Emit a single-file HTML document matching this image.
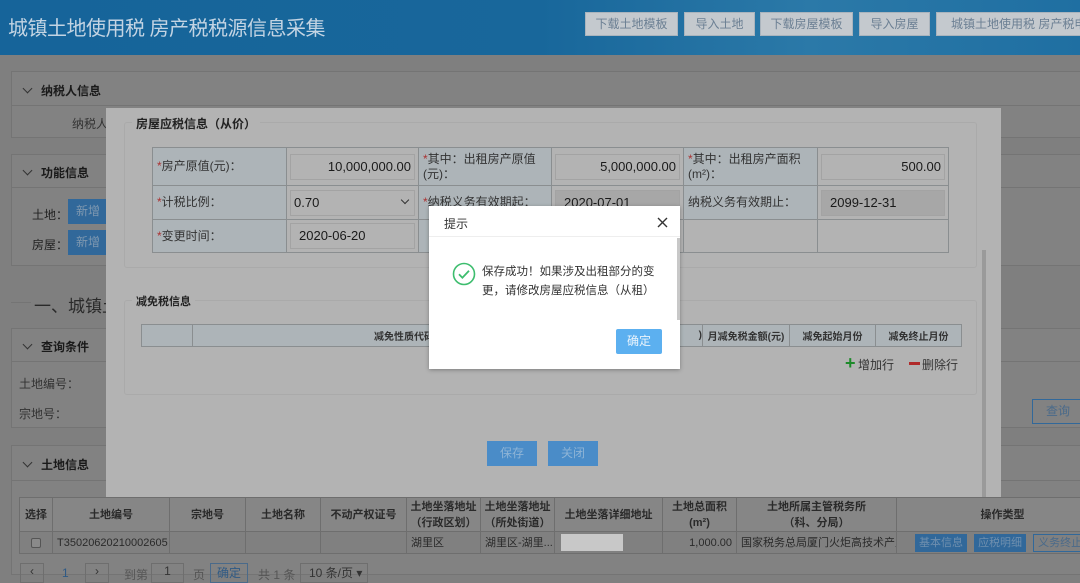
<!DOCTYPE html>
<html><head><meta charset="utf-8"><style>
*{box-sizing:border-box;margin:0;padding:0}
body{width:1080px;height:575px;overflow:hidden;background:#7f7f7f;font-family:"Liberation Sans","Noto Sans CJK SC",sans-serif;font-size:12px;color:#1e1e1e;position:relative}
.a{position:absolute}
.hd{left:0;top:0;width:1080px;height:55px;background:linear-gradient(90deg,#16649a 0%,#18679b 50%,#2b79a8 75%,#1f6fa2 100%)}
.hb{top:12px;height:24px;background:#c4c9ce;border:1px solid #aab4bd;color:#6b7f93;font-size:12px;text-align:center;line-height:22px}
.pn{border:1px solid #747474;background:#828282}
.ph{font-weight:bold;font-size:12px;color:#1a1a1a}
.chev{display:inline-block;width:7px;height:7px;border-right:1.3px solid #333;border-bottom:1.3px solid #333;transform:rotate(45deg);margin-right:10px;position:relative;top:-3px}
.bbtn{background:#31689a;color:#7f98b0;text-align:center}
table{border-collapse:collapse;table-layout:fixed}
td{white-space:nowrap;overflow:hidden}
.mt td{border:1px solid #8a8e90;vertical-align:middle}
.lb{background:#adb4b8;padding-left:4px;font-size:12px;color:#333;line-height:15px;white-space:normal!important}
.in{background:#b3b3b3;padding:3px 3px}
.ib{border:1px solid #a3a3a3;background:#b3b3b3;height:26px;line-height:24px;padding:0 3px;font-size:12px;color:#1a1a1a}
.st{color:#a33}
.bt td{border:1px solid #6e6e6e}
</style></head><body>
<div class="a hd"></div>
<div class="a" style="left:8px;top:12px;font-size:20px;color:#c3d4e3;letter-spacing:-0.5px">城镇土地使用税 房产税税源信息采集</div>
<div class="a hb" style="left:585px;width:93px">下载土地模板</div>
<div class="a hb" style="left:684px;width:71px">导入土地</div>
<div class="a hb" style="left:760px;width:93px">下载房屋模板</div>
<div class="a hb" style="left:859px;width:71px">导入房屋</div>
<div class="a hb" style="left:936px;width:160px;text-align:left;padding-left:14px;white-space:nowrap;overflow:hidden">城镇土地使用税 房产税申报</div>

<div class="a pn" style="left:11px;top:71px;width:1080px;height:67px"><div style="height:34px;border-bottom:1px solid #747474;padding:10px 0 0 12px" class="ph"><span class="chev"></span>纳税人信息</div><div style="padding:9px 0 0 60px;color:#333">纳税人</div></div>
<div class="a pn" style="left:11px;top:154px;width:1080px;height:112px"><div style="height:33px;border-bottom:1px solid #747474;padding:9px 0 0 12px" class="ph"><span class="chev"></span>功能信息</div></div>
<div class="a" style="left:32px;top:206px;color:#222">土地：</div><div class="a bbtn" style="left:68px;top:199px;width:40px;height:25px;line-height:25px">新增</div>
<div class="a" style="left:32px;top:236px;color:#222">房屋：</div><div class="a bbtn" style="left:68px;top:230px;width:40px;height:25px;line-height:25px">新增</div>
<div class="a" style="left:11px;top:302px;width:20px;border-top:1px solid #747474"></div>
<div class="a" style="left:34px;top:292px;font-size:17px;color:#2a2a2a">一、城镇土</div>
<div class="a pn" style="left:11px;top:328px;width:1080px;height:100px"><div style="height:33px;border-bottom:1px solid #747474;padding:9px 0 0 12px" class="ph"><span class="chev"></span>查询条件</div></div>
<div class="a" style="left:19px;top:375px;color:#333">土地编号：</div>
<div class="a" style="left:19px;top:405px;color:#333">宗地号：</div>
<div class="a" style="left:1032px;top:399px;width:60px;height:25px;border:1px solid #31689a;color:#4a6a8a;line-height:23px;padding-left:13px">查询</div>
<div class="a pn" style="left:11px;top:445px;width:1080px;height:130px"><div style="height:35px;border-bottom:1px solid #747474;padding:10px 0 0 12px" class="ph"><span class="chev"></span>土地信息</div></div>
<table class="a bt" style="left:19px;top:497px;width:1090px;font-size:11px;color:#2a2a2a">
<colgroup><col style="width:33px"><col style="width:117px"><col style="width:76px"><col style="width:75px"><col style="width:86px"><col style="width:74px"><col style="width:74px"><col style="width:108px"><col style="width:74px"><col style="width:160px"><col></colgroup>
<tr style="height:34px;background:#868686;text-align:center;font-weight:bold;line-height:16px">
<td>选择</td><td>土地编号</td><td>宗地号</td><td>土地名称</td><td>不动产权证号</td><td>土地坐落地址<br>（行政区划）</td><td>土地坐落地址<br>（所处街道）</td><td>土地坐落详细地址</td><td>土地总面积<br>(m²)</td><td>土地所属主管税务所<br>（科、分局）</td><td>操作类型</td></tr>
<tr style="height:22px;background:#808080;line-height:18px">
<td style="text-align:center"><span style="display:inline-block;width:10px;height:10px;border:1px solid #555;background:#8a8a8a;border-radius:2px;vertical-align:middle"></span></td><td style="padding-left:4px">T35020620210002605</td><td></td><td></td><td></td><td style="padding-left:4px">湖里区</td><td style="padding-left:4px">湖里区-湖里...</td><td style="padding-left:6px"><span style="display:inline-block;width:62px;height:17px;background:#c8c8c8;vertical-align:middle"></span></td><td style="text-align:right;padding-right:4px">1,000.00</td><td style="padding-left:4px">国家税务总局厦门火炬高技术产业...</td><td style="padding-left:18px"><span style="display:inline-block;background:#31689a;color:#6f8fae;padding:0 4px">基本信息</span> <span style="display:inline-block;background:#31689a;color:#6f8fae;padding:0 4px;margin-left:4px">应税明细</span> <span style="display:inline-block;border:1px solid #31689a;color:#4a6a8a;padding:0 4px;margin-left:4px;line-height:16px">义务终止</span></td></tr></table>
<div class="a" style="left:20px;top:563px;width:24px;height:20px;border:1px solid #6e6e6e;text-align:center;color:#333">‹</div>
<div class="a" style="left:62px;top:566px;color:#2f5a85">1</div>
<div class="a" style="left:85px;top:563px;width:24px;height:20px;border:1px solid #6e6e6e;text-align:center;color:#333">›</div>
<div class="a" style="left:124px;top:566px;color:#555">到第</div>
<div class="a" style="left:151px;top:563px;width:33px;height:20px;border:1px solid #6e6e6e;text-align:center;color:#333">1</div>
<div class="a" style="left:193px;top:566px;color:#555">页</div>
<div class="a" style="left:210px;top:563px;width:38px;height:20px;border:1px solid #4a6a8a;text-align:center;color:#2f5a85">确定</div>
<div class="a" style="left:258px;top:566px;color:#555">共 1 条</div>
<div class="a" style="left:300px;top:563px;width:68px;height:20px;border:1px solid #6e6e6e;padding-left:8px;color:#333">10 条/页 ▾</div>

<!-- modal -->
<div class="a" style="left:106px;top:108px;width:895px;height:389px;background:#b3b3b3"></div>
<div class="a" style="left:982px;top:250px;width:4px;height:247px;background:#9a9a9a"></div>
<div class="a" style="left:124px;top:122px;width:853px;height:146px;border:1px solid #aaa;border-radius:3px"></div>
<div class="a" style="left:132px;top:115px;background:#b3b3b3;padding:0 4px;font-weight:bold;color:#222">房屋应税信息（从价）</div>
<table class="a mt" style="left:152px;top:147px;width:797px">
<colgroup><col style="width:134px"><col style="width:132px"><col style="width:133px"><col style="width:132px"><col style="width:134px"><col></colgroup>
<tr style="height:38px"><td class="lb"><span class="st">*</span>房产原值(元)：</td><td class="in"><div class="ib" style="text-align:right;font-size:13px">10,000,000.00</div></td><td class="lb"><span class="st">*</span>其中：出租房产原值(元)：</td><td class="in"><div class="ib" style="text-align:right;font-size:13px">5,000,000.00</div></td><td class="lb"><span class="st">*</span>其中：出租房产面积(m²)：</td><td class="in"><div class="ib" style="text-align:right;font-size:13px">500.00</div></td></tr>
<tr style="height:34px"><td class="lb"><span class="st">*</span>计税比例：</td><td class="in"><div class="ib" style="font-size:13px;position:relative">0.70<span style="position:absolute;right:6px;top:6px;width:6px;height:6px;border-right:1.3px solid #333;border-bottom:1.3px solid #333;transform:rotate(45deg)"></span></div></td><td class="lb"><span class="st">*</span>纳税义务有效期起：</td><td class="in"><div class="ib" style="background:#a7a7a7;padding-left:8px;font-size:13px">2020-07-01</div></td><td class="lb">纳税义务有效期止：</td><td class="in"><div class="ib" style="background:#a7a7a7;padding-left:8px;font-size:13px">2099-12-31</div></td></tr>
<tr style="height:33px"><td class="lb"><span class="st">*</span>变更时间：</td><td class="in"><div class="ib" style="padding-left:8px;font-size:13px">2020-06-20</div></td><td class="lb"></td><td class="in"></td><td class="lb" style="background:#b3b3b3"></td><td class="in"></td></tr></table>

<div class="a" style="left:124px;top:300px;width:853px;height:95px;border:1px solid #aaa;border-radius:3px"></div>
<div class="a" style="left:132px;top:293px;background:#b3b3b3;padding:0 4px;font-weight:bold;color:#222;font-size:11px">减免税信息</div>
<table class="a" style="left:141px;top:324px;width:820px;font-size:10px;font-weight:bold;color:#333">
<colgroup><col style="width:51px"><col style="width:423px"><col style="width:87px"><col style="width:87px"><col style="width:86px"><col style="width:86px"></colgroup>
<tr style="height:22px;background:#adb4b8;text-align:center"><td style="border:1px solid #8a8e90"></td><td style="border:1px solid #8a8e90">减免性质代码</td><td style="border:1px solid #8a8e90;text-align:right">)</td><td style="border:1px solid #8a8e90">月减免税金额(元)</td><td style="border:1px solid #8a8e90">减免起始月份</td><td style="border:1px solid #8a8e90">减免终止月份</td></tr></table>
<div class="a" style="left:845px;top:353px;color:#1d8a2a;font-size:18px;font-weight:bold">+</div>
<div class="a" style="left:858px;top:356px;color:#333">增加行</div>
<div class="a" style="left:909px;top:362px;width:11px;height:3px;background:#b02a2a"></div>
<div class="a" style="left:922px;top:356px;color:#333">删除行</div>
<div class="a" style="left:487px;top:441px;width:50px;height:25px;background:#4a8cc8;color:#8eb4d6;text-align:center;line-height:25px">保存</div>
<div class="a" style="left:548px;top:441px;width:50px;height:25px;background:#4a8cc8;color:#8eb4d6;text-align:center;line-height:25px">关闭</div>

<!-- alert -->
<div class="a" style="left:429px;top:206px;width:251px;height:163px;background:#fff;box-shadow:0 1px 4px rgba(0,0,0,.3)">
<div style="height:31px;border-bottom:1px solid #eee;padding:9px 0 0 15px;color:#333">提示</div>
<svg class="a" style="left:228px;top:11px" width="11" height="11" viewBox="0 0 11 11"><path d="M1 1l9 9M10 1l-9 9" stroke="#333" stroke-width="1.4"/></svg>
<div class="a" style="left:248px;top:32px;width:3px;height:82px;background:#c8c8c8"></div>
<svg class="a" style="left:23px;top:56px" width="24" height="24" viewBox="0 0 24 24"><circle cx="12" cy="12" r="10.5" fill="none" stroke="#3dbd6e" stroke-width="1.6"/><path d="M7 12.3l3.4 3.4 6.6-7" fill="none" stroke="#3dbd6e" stroke-width="1.8"/></svg>
<div class="a" style="left:53px;top:57px;width:190px;font-size:11.5px;line-height:19px;color:#333">保存成功！如果涉及出租部分的变更，请修改房屋应税信息（从租）</div>
<div class="a" style="left:187px;top:123px;width:46px;height:25px;background:#5cb0f0;color:#eaf4fc;border-radius:2px;text-align:center;line-height:25px">确定</div>
</div>
</body></html>
